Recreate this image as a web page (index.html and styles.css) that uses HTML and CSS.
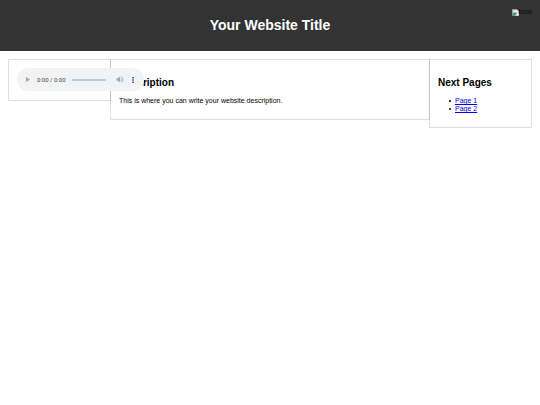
FILE: index.html
```html
<!DOCTYPE html>
<html lang="en">
<head>
<meta charset="utf-8">
<title>Your Website Title</title>
<meta name="viewport" content="width=device-width, initial-scale=1">
<link rel="stylesheet" href="styles.css">
</head>
<body>
<header class="header">
  <h1>Your Website Title</h1>
  <div class="icon">
    <svg viewBox="0 0 16 16" aria-hidden="true">
      <path d="M1 1h10l4 4v10H1z" fill="#c5d7f2" stroke="#c4c4c4"/>
      <path d="M11 1v4h4z" fill="#fff"/>
      <path d="M3 7q0-2 2-2 2-2 4 0 2 0 2 2z" fill="#fff"/>
      <path d="M1 15V12l5-5 5 3-5 5z" fill="#4a9c43"/>
      <path d="M8 15l7-6v6z" fill="#fff"/>
    </svg><span>Icon</span>
  </div>
</header>
<main class="columns">
  <section class="panel media">
    <div class="player">
      <button type="button" class="play" aria-label="Play"><svg viewBox="0 0 10 12"><path d="M0 0l10 6-10 6z" fill="#a5a6a7"/></svg></button>
      <span class="time">0:00 / 0:00</span>
      <input class="seek" type="range" min="0" max="100" value="0" aria-label="Seek" disabled>
      <button type="button" class="mute" aria-label="Mute"><svg viewBox="0 0 18 18"><path d="M0 6h4l5-5v16l-5-5H0z" fill="#a5a6a7"/><path d="M11 5q4 4 0 8M12 1q10 8 0 16" fill="none" stroke="#a5a6a7" stroke-width="2"/></svg></button>
      <button type="button" class="more" aria-label="More options"><svg viewBox="0 0 4 16"><circle cx="2" cy="2" r="2"/><circle cx="2" cy="8" r="2"/><circle cx="2" cy="14" r="2"/></svg></button>
    </div>
  </section>
  <section class="panel">
    <h2>Description</h2>
    <p>This is where you can write your website description.</p>
  </section>
  <section class="panel">
    <h2>Next Pages</h2>
    <ul>
      <li><a href="#page1">Page 1</a></li>
      <li><a href="#page2">Page 2</a></li>
    </ul>
  </section>
</main>
</body>
</html>
```
FILE: styles.css
```css
* {
  box-sizing: border-box;
}

body {
  margin: 0;
  background: #fff;
  color: #000;
  font: 7px/8px "Liberation Sans", Arial, sans-serif;
}

.header {
  position: relative;
  padding: 17px 8px 18px;
  background: #333;
  color: #fff;
  text-align: center;
}

h1 {
  margin: 0;
  font-size: 14px;
  line-height: 16px;
}

.icon {
  position: absolute;
  top: 8px;
  right: 8px;
  display: flex;
  align-items: center;
  color: #000;
}

.icon svg {
  width: 7px;
  height: 7px;
}

.columns {
  display: grid;
  grid-template-columns: minmax(0, 103fr) minmax(0, 319fr) minmax(0, 102fr);
  align-items: start;
  padding: 8px;
}

/* Neighbouring borders overlap by one pixel and darken each other. */
.panel {
  padding: 8px;
  border: 1px solid rgba(0, 0, 0, 0.12);
}

.panel + .panel {
  margin-left: -1px;
}

.media {
  position: relative;
  z-index: 1;
  padding-bottom: 9px;
}

.player {
  display: flex;
  align-items: center;
  width: 127px;
  height: 23px;
  padding: 0 10px 0 9px;
  border-radius: 12px;
  background: #f1f3f4;
}

button {
  display: flex;
  padding: 0;
  border: 0;
  background: none;
}

.play svg {
  width: 4px;
  height: 5px;
}

.time {
  margin: 0 6px 0 7px;
  color: #444;
  font-family: Roboto, sans-serif;
  font-size: 6px;
  white-space: nowrap;
}

.seek {
  appearance: none;
  flex: 1;
  min-width: 0;
  height: 2px;
  margin: 0;
  border-radius: 1px;
  background: #c4c6c7;
}

.seek::-webkit-slider-thumb {
  appearance: none;
  width: 0;
  height: 0;
}

.mute {
  margin: 0 8px 0 10px;
}

.mute svg {
  width: 8px;
  height: 7px;
}

.more svg {
  width: 2px;
  height: 6px;
}

h2 {
  margin: 9px 0 8px;
  font-size: 10px;
  line-height: 12px;
}

p,
ul {
  margin: 8px 0 6px;
}

ul {
  padding-left: 11px;
  list-style: none;
}

li {
  display: flex;
  align-items: center;
  gap: 4px;
}

li::before {
  content: "";
  width: 2px;
  height: 2px;
  border-radius: 1px;
  background: #000;
}

a {
  color: #0000ee;
}
```
